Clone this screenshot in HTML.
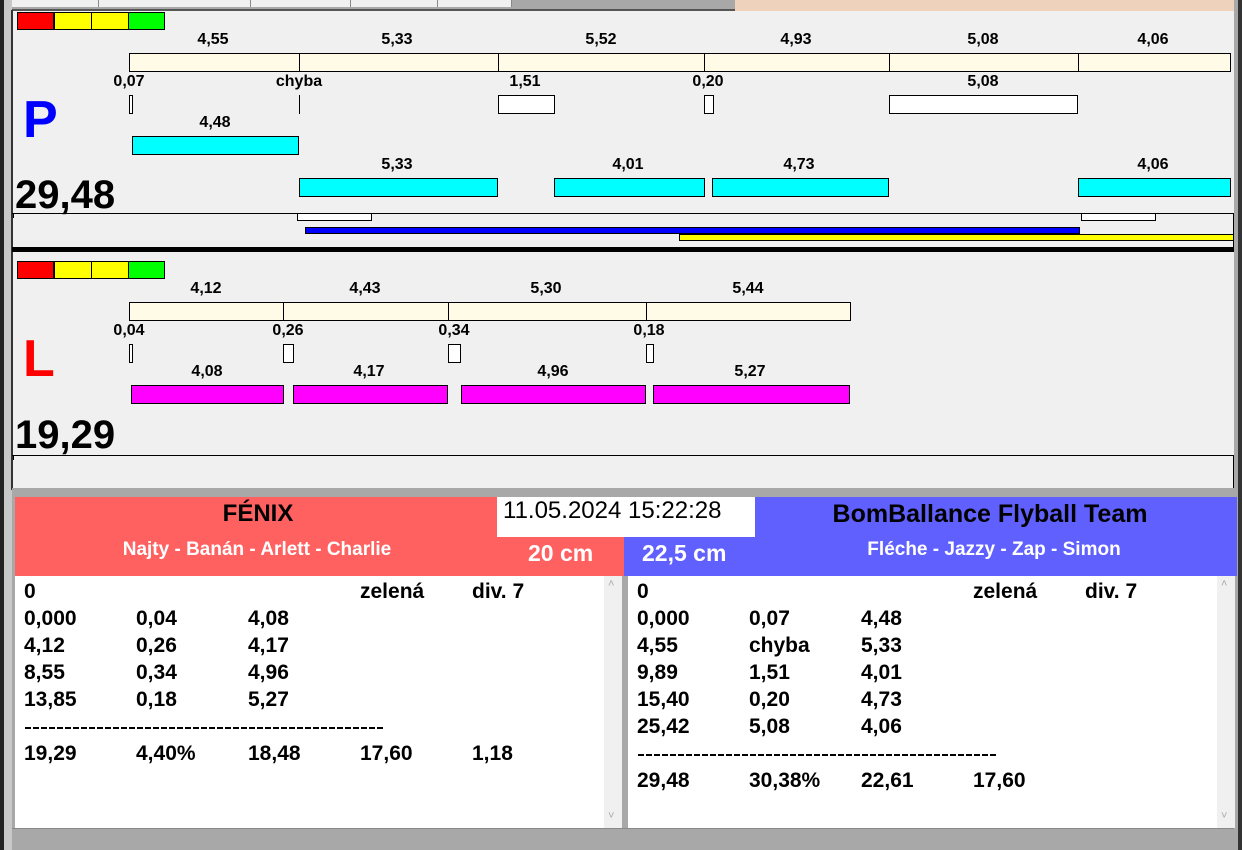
<!DOCTYPE html>
<html><head><meta charset="utf-8"><style>
*{margin:0;padding:0;box-sizing:border-box}
body{width:1242px;height:850px;overflow:hidden;background:#f0f0f0;position:relative;font-family:"Liberation Sans",sans-serif}
div{position:absolute}
.t{font-weight:bold;font-size:16px;color:#000;white-space:nowrap;transform:translateX(-50%);line-height:16px}
.cr{background:#fffbe6;border:1px solid #000}
.wb{background:#fff;border:1px solid #000}
.cy{background:#00ffff;border:1px solid #000}
.mg{background:#ff00ff;border:1px solid #000}
.vl{width:1px;background:#000}
.ls{font-family:"Liberation Sans Narrow","Liberation Sans",sans-serif;font-weight:bold;font-size:21px;line-height:27px;color:#000;white-space:pre}
.dash{height:2px;background:repeating-linear-gradient(90deg,#000 0 6px,transparent 6px 8px)}
</style></head><body>
<!-- top strip -->
<div style="left:0;top:0;width:735px;height:10px;background:#a8a8a8"></div>
<div style="left:12px;top:0;width:500px;height:7px;background:#f0f0f0;border-right:1px solid #888"></div>
<div style="left:98px;top:0;width:1px;height:7px;background:#888"></div>
<div style="left:250px;top:0;width:1px;height:7px;background:#888"></div>
<div style="left:350px;top:0;width:1px;height:7px;background:#888"></div>
<div style="left:437px;top:0;width:1px;height:7px;background:#888"></div>
<div style="left:12px;top:9px;width:723px;height:2px;background:#555"></div>
<div style="left:735px;top:0;width:503px;height:11px;background:#efd2bb"></div>
<!-- left/right frame -->
<div style="left:0;top:0;width:4px;height:850px;background:#222"></div>
<div style="left:4px;top:0;width:8px;height:850px;background:#c8c8c8"></div>
<div style="left:11px;top:10px;width:2px;height:480px;background:#333"></div>
<div style="left:1234px;top:0;width:4px;height:850px;background:#a8a8a8"></div>
<div style="left:1238px;top:0;width:4px;height:850px;background:#333"></div>
<div style="left:12px;top:247px;width:1222px;height:5px;background:#000"></div>

<!-- PANEL P -->
<div style="left:17px;top:12px;width:37px;height:18px;background:#f00;border:1px solid #000"></div>
<div style="left:54px;top:12px;width:38px;height:18px;background:#ff0;border:1px solid #000"></div>
<div style="left:91px;top:12px;width:38px;height:18px;background:#ff0;border:1px solid #000"></div>
<div style="left:128px;top:12px;width:37px;height:18px;background:#0f0;border:1px solid #000"></div>
<div class="t" style="left:213px;top:32px">4,55</div>
<div class="t" style="left:397px;top:32px">5,33</div>
<div class="t" style="left:601px;top:32px">5,52</div>
<div class="t" style="left:796px;top:32px">4,93</div>
<div class="t" style="left:983px;top:32px">5,08</div>
<div class="t" style="left:1153px;top:32px">4,06</div>
<div class="cr" style="left:129px;top:53px;width:1102px;height:19px"></div>
<div class="vl" style="left:299px;top:53px;height:19px"></div>
<div class="vl" style="left:498px;top:53px;height:19px"></div>
<div class="vl" style="left:704px;top:53px;height:19px"></div>
<div class="vl" style="left:889px;top:53px;height:19px"></div>
<div class="vl" style="left:1078px;top:53px;height:19px"></div>
<div class="t" style="left:129px;top:74px">0,07</div>
<div class="t" style="left:299px;top:74px">chyba</div>
<div class="t" style="left:525px;top:74px">1,51</div>
<div class="t" style="left:708px;top:74px">0,20</div>
<div class="t" style="left:983px;top:74px">5,08</div>
<div class="wb" style="left:129px;top:95px;width:4px;height:19px"></div>
<div class="vl" style="left:299px;top:95px;height:19px"></div>
<div class="wb" style="left:498px;top:95px;width:57px;height:19px"></div>
<div class="wb" style="left:704px;top:95px;width:10px;height:19px"></div>
<div class="wb" style="left:889px;top:95px;width:189px;height:19px"></div>
<div style="left:23px;top:90px;font-size:52px;font-weight:bold;color:#0000ff;line-height:60px">P</div>
<div class="t" style="left:215px;top:115px">4,48</div>
<div class="cy" style="left:132px;top:136px;width:167px;height:19px"></div>
<div class="t" style="left:397px;top:157px">5,33</div>
<div class="t" style="left:628px;top:157px">4,01</div>
<div class="t" style="left:799px;top:157px">4,73</div>
<div class="t" style="left:1153px;top:157px">4,06</div>
<div class="cy" style="left:299px;top:178px;width:199px;height:19px"></div>
<div class="cy" style="left:554px;top:178px;width:151px;height:19px"></div>
<div class="cy" style="left:712px;top:178px;width:177px;height:19px"></div>
<div class="cy" style="left:1078px;top:178px;width:153px;height:19px"></div>
<div style="left:15px;top:172px;font-size:40px;font-weight:bold;line-height:46px">29,48</div>
<div style="left:12px;top:213px;width:1222px;height:1px;background:#000"></div>
<div class="vl" style="left:13px;top:213px;height:5px"></div>
<div class="vl" style="left:1233px;top:213px;height:34px"></div>
<div class="wb" style="left:297px;top:213px;width:75px;height:8px"></div>
<div class="wb" style="left:1081px;top:213px;width:75px;height:8px"></div>
<div style="left:305px;top:227px;width:775px;height:7px;background:#0000ff;border:1px solid #000"></div>
<div style="left:679px;top:234px;width:555px;height:7px;background:#ff0;border:1px solid #000"></div>

<!-- PANEL L -->
<div style="left:17px;top:261px;width:37px;height:18px;background:#f00;border:1px solid #000"></div>
<div style="left:54px;top:261px;width:38px;height:18px;background:#ff0;border:1px solid #000"></div>
<div style="left:91px;top:261px;width:38px;height:18px;background:#ff0;border:1px solid #000"></div>
<div style="left:128px;top:261px;width:37px;height:18px;background:#0f0;border:1px solid #000"></div>
<div class="t" style="left:206px;top:281px">4,12</div>
<div class="t" style="left:365px;top:281px">4,43</div>
<div class="t" style="left:546px;top:281px">5,30</div>
<div class="t" style="left:748px;top:281px">5,44</div>
<div class="cr" style="left:129px;top:302px;width:722px;height:19px"></div>
<div class="vl" style="left:283px;top:302px;height:19px"></div>
<div class="vl" style="left:448px;top:302px;height:19px"></div>
<div class="vl" style="left:646px;top:302px;height:19px"></div>
<div class="t" style="left:129px;top:323px">0,04</div>
<div class="t" style="left:288px;top:323px">0,26</div>
<div class="t" style="left:454px;top:323px">0,34</div>
<div class="t" style="left:649px;top:323px">0,18</div>
<div class="wb" style="left:129px;top:344px;width:4px;height:19px"></div>
<div class="wb" style="left:283px;top:344px;width:11px;height:19px"></div>
<div class="wb" style="left:448px;top:344px;width:13px;height:19px"></div>
<div class="wb" style="left:646px;top:344px;width:8px;height:19px"></div>
<div style="left:23px;top:330px;font-size:52px;font-weight:bold;color:#ff0000;line-height:58px">L</div>
<div class="t" style="left:207px;top:364px">4,08</div>
<div class="t" style="left:369px;top:364px">4,17</div>
<div class="t" style="left:553px;top:364px">4,96</div>
<div class="t" style="left:750px;top:364px">5,27</div>
<div class="mg" style="left:131px;top:385px;width:153px;height:19px"></div>
<div class="mg" style="left:293px;top:385px;width:155px;height:19px"></div>
<div class="mg" style="left:461px;top:385px;width:185px;height:19px"></div>
<div class="mg" style="left:653px;top:385px;width:197px;height:19px"></div>
<div style="left:15px;top:412px;font-size:40px;font-weight:bold;line-height:46px">19,29</div>
<div style="left:12px;top:455px;width:1222px;height:1px;background:#000"></div>
<div class="vl" style="left:13px;top:455px;height:5px"></div>
<div class="vl" style="left:1233px;top:455px;height:34px"></div>

<!-- bottom area -->
<div style="left:12px;top:488px;width:1222px;height:9px;background:#a8a8a8"></div>
<div style="left:12px;top:828px;width:1222px;height:22px;background:#a8a8a8;border-top:1px solid #888"></div>
<div style="left:12px;top:497px;width:3px;height:331px;background:#a8a8a8"></div>
<div style="left:15px;top:497px;width:609px;height:79px;background:#ff6060"></div>
<div style="left:624px;top:537px;width:613px;height:39px;background:#6060ff"></div>
<div style="left:755px;top:497px;width:482px;height:40px;background:#6060ff"></div>
<div style="left:497px;top:497px;width:258px;height:40px;background:#fff"></div>
<div style="left:503px;top:497px;font-size:24px;line-height:28px;color:#000">11.05.2024 15:22:28</div>
<div style="left:258px;top:500px;transform:translateX(-50%);font-size:24px;font-weight:bold;line-height:28px;font-family:'Liberation Sans Narrow','Liberation Sans',sans-serif">FÉNIX</div>
<div style="left:257px;top:539px;transform:translateX(-50%);font-size:19px;font-weight:bold;color:#fff;white-space:nowrap;line-height:22px;font-family:'Liberation Sans Narrow','Liberation Sans',sans-serif">Najty - Banán - Arlett - Charlie</div>
<div style="left:528px;top:540px;font-size:23px;font-weight:bold;color:#fff;line-height:26px;font-family:'Liberation Sans Narrow','Liberation Sans',sans-serif">20 cm</div>
<div style="left:642px;top:540px;font-size:23px;font-weight:bold;color:#fff;line-height:26px;font-family:'Liberation Sans Narrow','Liberation Sans',sans-serif">22,5 cm</div>
<div style="left:990px;top:500px;transform:translateX(-50%);font-size:25px;font-weight:bold;white-space:nowrap;line-height:28px;font-family:'Liberation Sans Narrow','Liberation Sans',sans-serif">BomBallance Flyball Team</div>
<div style="left:994px;top:539px;transform:translateX(-50%);font-size:19px;font-weight:bold;color:#fff;white-space:nowrap;line-height:22px;font-family:'Liberation Sans Narrow','Liberation Sans',sans-serif">Fléche - Jazzy - Zap - Simon</div>

<div style="left:15px;top:576px;width:607px;height:252px;background:#fff;border-right:1px solid #ccc"></div>
<div style="left:604px;top:576px;width:18px;height:252px;background:#f0f0f0"></div>
<div style="left:608px;top:578px;font-size:11px;color:#aaa">˄</div>
<div style="left:608px;top:810px;font-size:11px;color:#aaa">˅</div>
<div style="left:622px;top:576px;width:6px;height:252px;background:#a8a8a8"></div>
<div style="left:628px;top:576px;width:607px;height:252px;background:#fff"></div>
<div style="left:1217px;top:576px;width:18px;height:252px;background:#f0f0f0"></div>
<div style="left:1221px;top:578px;font-size:11px;color:#aaa">˄</div>
<div style="left:1221px;top:810px;font-size:11px;color:#aaa">˅</div>

<div class="ls" style="left:24px;top:578px">0</div>
<div class="ls" style="left:360px;top:578px">zelená</div>
<div class="ls" style="left:472px;top:578px">div. 7</div>
<div class="ls" style="left:24px;top:605px">0,000</div><div class="ls" style="left:136px;top:605px">0,04</div><div class="ls" style="left:248px;top:605px">4,08</div>
<div class="ls" style="left:24px;top:632px">4,12</div><div class="ls" style="left:136px;top:632px">0,26</div><div class="ls" style="left:248px;top:632px">4,17</div>
<div class="ls" style="left:24px;top:659px">8,55</div><div class="ls" style="left:136px;top:659px">0,34</div><div class="ls" style="left:248px;top:659px">4,96</div>
<div class="ls" style="left:24px;top:686px">13,85</div><div class="ls" style="left:136px;top:686px">0,18</div><div class="ls" style="left:248px;top:686px">5,27</div>
<div class="dash" style="left:25px;top:727px;width:360px"></div>
<div class="ls" style="left:24px;top:740px">19,29</div><div class="ls" style="left:136px;top:740px">4,40%</div><div class="ls" style="left:248px;top:740px">18,48</div><div class="ls" style="left:360px;top:740px">17,60</div><div class="ls" style="left:472px;top:740px">1,18</div>

<div class="ls" style="left:637px;top:578px">0</div>
<div class="ls" style="left:973px;top:578px">zelená</div>
<div class="ls" style="left:1085px;top:578px">div. 7</div>
<div class="ls" style="left:637px;top:605px">0,000</div><div class="ls" style="left:749px;top:605px">0,07</div><div class="ls" style="left:861px;top:605px">4,48</div>
<div class="ls" style="left:637px;top:632px">4,55</div><div class="ls" style="left:749px;top:632px">chyba</div><div class="ls" style="left:861px;top:632px">5,33</div>
<div class="ls" style="left:637px;top:659px">9,89</div><div class="ls" style="left:749px;top:659px">1,51</div><div class="ls" style="left:861px;top:659px">4,01</div>
<div class="ls" style="left:637px;top:686px">15,40</div><div class="ls" style="left:749px;top:686px">0,20</div><div class="ls" style="left:861px;top:686px">4,73</div>
<div class="ls" style="left:637px;top:713px">25,42</div><div class="ls" style="left:749px;top:713px">5,08</div><div class="ls" style="left:861px;top:713px">4,06</div>
<div class="dash" style="left:638px;top:754px;width:360px"></div>
<div class="ls" style="left:637px;top:767px">29,48</div><div class="ls" style="left:749px;top:767px">30,38%</div><div class="ls" style="left:861px;top:767px">22,61</div><div class="ls" style="left:973px;top:767px">17,60</div>
</body></html>
